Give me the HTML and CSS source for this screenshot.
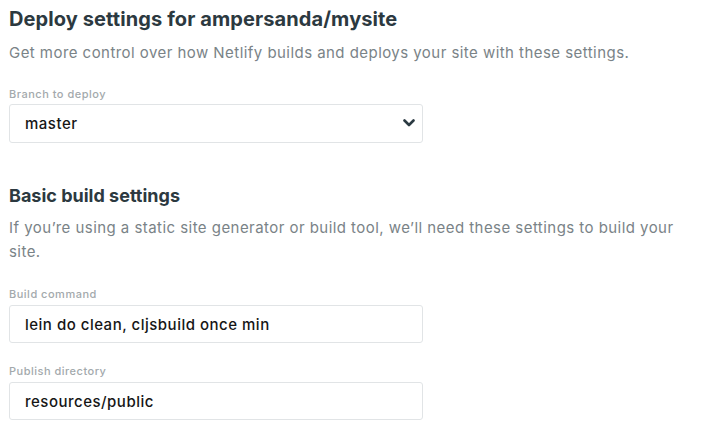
FILE: index.html
```html
<!DOCTYPE html>
<html lang="en">
<head>
<meta charset="utf-8">
<title>Deploy settings</title>
<link rel="stylesheet" href="styles.css">
</head>
<body>
<main class="page">
  <section class="section">
    <h1 class="title">Deploy settings for ampersanda/mysite</h1>
    <p class="desc">Get more control over how Netlify builds and deploys your site with these settings.</p>
    <div class="field field-first">
      <label class="label" for="branch">Branch to deploy</label>
      <div class="select-wrap">
        <select class="control select" id="branch">
          <option>master</option>
        </select>
        <svg class="chevron" width="12" height="8" viewBox="0 0 12 8" aria-hidden="true">
          <path d="M1.5 1.5 L6 6 L10.5 1.5" fill="none" stroke="#2b3a42" stroke-width="2.6" stroke-linecap="round" stroke-linejoin="round"/>
        </svg>
      </div>
    </div>
  </section>

  <section class="section section-build">
    <h2 class="subtitle">Basic build settings</h2>
    <p class="desc desc-build">If you’re using a static site generator or build tool, we’ll need these settings to build your site.</p>
    <div class="field field-first">
      <label class="label" for="cmd">Build command</label>
      <input class="control input" id="cmd" type="text" value="lein do clean, cljsbuild once min" readonly>
    </div>
    <div class="field">
      <label class="label" for="dir">Publish directory</label>
      <input class="control input" id="dir" type="text" value="resources/public" readonly>
    </div>
  </section>
</main>
</body>
</html>
```

FILE: styles.css
```css
html, body {
  margin: 0;
  padding: 0;
  background: #ffffff;
}

body {
  font-family: Inter, "Noto Sans", "Liberation Sans", sans-serif;
  -webkit-font-smoothing: antialiased;
}

.page {
  padding: 7px 9px 0 9px;
  width: 680px;
}

.title {
  margin: 0;
  font-size: 20px;
  line-height: 24px;
  font-weight: 700;
  letter-spacing: 0.1px;
  color: #2c3940;
}

.desc {
  margin: 10px 0 0 0;
  font-size: 15px;
  line-height: 24px;
  letter-spacing: 0.45px;
  color: #7a8387;
  width: 680px;
}

.field {
  display: flex;
  flex-direction: column;
  gap: 3px;
  width: 414px;
  margin-top: 21px;
}

.field-first {
  margin-top: 22px;
}

.label {
  font-size: 11px;
  line-height: 14px;
  letter-spacing: 0.5px;
  color: #a3a9ac;
  font-weight: 500;
}

.select-wrap {
  position: relative;
  display: flex;
}

.control {
  box-sizing: border-box;
  width: 100%;
  margin: 0;
  border: 1px solid #e1e4e6;
  border-radius: 3px;
  background: #ffffff;
  font-family: inherit;
  font-size: 15px;
  font-weight: 500;
  letter-spacing: 0.5px;
  color: #161616;
  padding: 0 15px;
  outline: none;
  box-shadow: none;
}

.select {
  height: 39px;
  -webkit-appearance: none;
  appearance: none;
}

.chevron {
  position: absolute;
  right: 8px;
  top: 15px;
  pointer-events: none;
}

.input {
  height: 38px;
}

.section-build {
  margin-top: 41px;
}

.subtitle {
  margin: 0;
  font-size: 18px;
  line-height: 24px;
  font-weight: 700;
  color: #2c3940;
}

.desc-build {
  margin-top: 8px;
}

.section-build .field-first {
  margin-top: 23px;
}

.section-build .field {
  gap: 4px;
}
```
